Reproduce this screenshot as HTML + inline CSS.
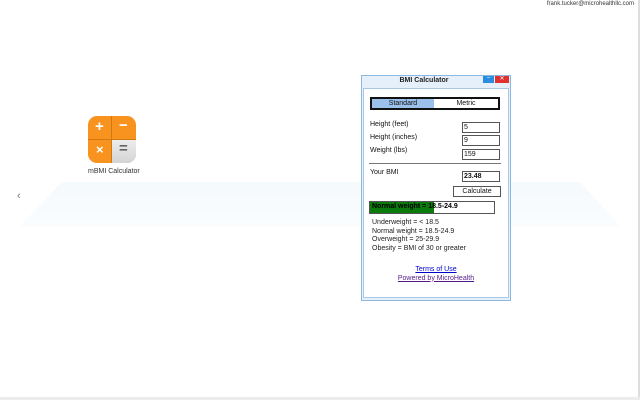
<!DOCTYPE html>
<html><head><style>
*{margin:0;padding:0;box-sizing:border-box}
body{width:640px;height:400px;background:#fff;position:relative;overflow:hidden;font-family:"Liberation Sans",sans-serif;font-size:7px;color:#111}
.a{position:absolute}
.inp{position:absolute;border:1px solid #555;background:#fff;font-size:7px;padding:1px 1px;height:11px;width:38px;left:462px;line-height:8px}
.lbl{position:absolute;left:370px;font-size:7px}
</style></head><body>
<div class="a" style="right:6px;top:1px;font-size:6px;color:#333">frank.tucker@microhealthllc.com</div>
<div class="a" style="right:0;top:0;width:2px;height:400px;background:#ddd"></div>
<div class="a" style="left:0;bottom:0;width:640px;height:3px;background:#ececec"></div>
<svg class="a" style="left:0;top:0" width="640" height="400"><defs><linearGradient id="g" x1="0" y1="0" x2="0" y2="1"><stop offset="0" stop-color="#f5fafd"/><stop offset="1" stop-color="#fafcfe"/></linearGradient></defs><polygon points="62,182 580,182 620,226 20,226" fill="url(#g)"/></svg>
<div class="a" style="left:17px;top:190px;font-size:11px;color:#777">‹</div>
<div class="a" style="left:88px;top:116px;width:48px;height:47px;border-radius:9px;overflow:hidden;background:#f7931e">
 <div class="a" style="left:24px;top:24px;width:24px;height:23px;background:linear-gradient(#ececec,#d4d4d4)"></div>
 <div class="a" style="left:23px;top:0;width:1px;height:47px;background:#d07a10"></div>
 <div class="a" style="left:0;top:23px;width:48px;height:1px;background:#d07a10"></div>
 <div class="a" style="left:7px;top:2px;color:#fff;font-size:15px;font-weight:bold">+</div>
 <div class="a" style="left:31px;top:1px;color:#fff;font-size:15px;font-weight:bold">−</div>
 <div class="a" style="left:8px;top:26px;color:#fff;font-size:13px;font-weight:bold">×</div>
 <div class="a" style="left:31px;top:24px;color:#666;font-size:15px;font-weight:bold">=</div>
</div>
<div class="a" style="left:88px;top:168px;font-size:7px;color:#333">mBMI Calculator</div>
<div class="a" style="left:361px;top:75px;width:150px;height:226px;border:1px solid #8cb8e0;background:#e6f0fa"></div>
<div class="a" style="left:366px;top:77px;width:116px;text-align:center;font-size:7px;font-weight:bold;color:#222">BMI Calculator</div>
<div class="a" style="left:483px;top:76px;width:11px;height:7px;background:#2a8ee0;color:#fff;font-size:6px;text-align:center;line-height:5px">–</div>
<div class="a" style="left:495px;top:76px;width:14px;height:7px;background:#e03030;color:#fff;font-size:6px;text-align:center;line-height:7px">✕</div>
<div class="a" style="left:363px;top:88px;width:146px;height:210px;background:#fff;border:1px solid #a8c8e6"></div>
<div class="a" style="left:370px;top:97px;width:130px;height:13px;border:2px solid #111;background:#fff"></div>
<div class="a" style="left:372px;top:99px;width:62px;height:9px;background:#9cc0ec;text-align:center;font-size:7px;line-height:9px">Standard</div>
<div class="a" style="left:434px;top:99px;width:64px;height:9px;text-align:center;font-size:7px;line-height:9px">Metric</div>
<div class="lbl" style="top:121px">Height (feet)</div>
<div class="lbl" style="top:134px">Height (inches)</div>
<div class="lbl" style="top:147px">Weight (lbs)</div>
<div class="inp" style="top:122px">5</div>
<div class="inp" style="top:135px">9</div>
<div class="inp" style="top:149px">159</div>
<div class="a" style="left:369px;top:163px;width:132px;height:1px;background:#777"></div>
<div class="lbl" style="top:169px">Your BMI</div>
<div class="inp" style="top:171px;font-weight:bold">23.48</div>
<div class="a" style="left:453px;top:186px;width:48px;height:11px;border:1px solid #555;text-align:center;font-size:7px;line-height:9px">Calculate</div>
<div class="a" style="left:369px;top:201px;width:126px;height:13px;border:1px solid #555"></div>
<div class="a" style="left:370px;top:202px;width:64px;height:11px;background:#0a7a0a"></div>
<div class="a" style="left:372px;top:203px;font-size:7px;font-weight:bold;color:#000">Normal weight = 18.5-24.9</div>
<div class="a" style="left:372px;top:219px;font-size:7px;line-height:8.5px;color:#222">Underweight = &lt; 18.5<br>Normal weight = 18.5-24.9<br>Overweight = 25-29.9<br>Obesity = BMI of 30 or greater</div>
<div class="a" style="left:363px;top:266px;width:146px;text-align:center;font-size:7px;line-height:8.5px"><span style="color:#00c;text-decoration:underline">Terms of Use</span><br><span style="color:#551a8b;text-decoration:underline">Powered by MicroHealth</span></div>
</body></html>
